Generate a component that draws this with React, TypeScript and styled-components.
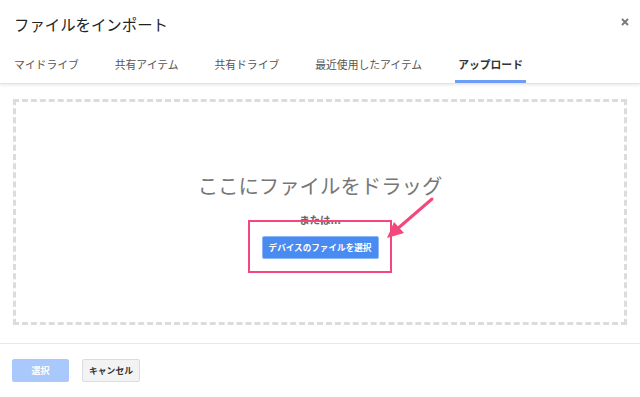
import styled, { createGlobalStyle } from "styled-components";

const GlobalStyle = createGlobalStyle`
  html,
  body {
    margin: 0;
    background: #fff;
  }
  body {
    font-family: "Noto Sans CJK JP", "Noto Sans", sans-serif;
    color: #222;
  }
`;

const Dialog = styled.div`
  width: 640px;
  height: 397px;
  display: flex;
  flex-direction: column;
  background: #fff;
`;

const Header = styled.div`
  border-bottom: 1px solid #e4e4e4;
  box-shadow: 0 1px 3px rgba(0, 0, 0, 0.1);
`;

const TitleRow = styled.div`
  height: 50px;
  display: flex;
  align-items: center;
  justify-content: space-between;
  padding: 0 10px 2px 14px;
  box-sizing: border-box;
`;

const Title = styled.h1`
  margin: 0;
  font-size: 15.4px;
  font-weight: 400;
  color: #222;
`;

const Close = styled.button`
  border: 0;
  background: none;
  padding: 0;
  width: 10px;
  height: 10px;
  display: flex;
  align-items: center;
  justify-content: center;
  margin-bottom: 4px;
`;

const Tabs = styled.div`
  display: flex;
  gap: 30px;
  padding-left: 11px;
  height: 33px;
`;

const Tab = styled.div<{ $active?: boolean }>`
  display: flex;
  align-items: center;
  padding: 0 3px 2px;
  box-sizing: border-box;
  font-size: 10.8px;
  font-weight: ${(p) => (p.$active ? 700 : 400)};
  color: ${(p) => (p.$active ? "#333" : "#555")};
  border-bottom: 3px solid ${(p) => (p.$active ? "#6d9ef6" : "transparent")};
`;

const Body = styled.div`
  padding: 15px 13px 0;
`;

const DropZone = styled.div`
  height: 226px;
  box-sizing: border-box;
  border: 3px dashed #dcdcdc;
  display: flex;
  flex-direction: column;
  align-items: center;
  padding-top: 71px;
`;

const DropText = styled.div`
  font-size: 20.4px;
  line-height: 24px;
  color: #777;
`;

const OrText = styled.div`
  margin-top: 16px;
  font-size: 10.5px;
  line-height: 14px;
  font-weight: 700;
  color: #666;
`;

const PickWrap = styled.div`
  position: relative;
  margin-top: 5px;
`;

const PrimaryButton = styled.button<{ $disabled?: boolean }>`
  font-family: inherit;
  font-weight: 700;
  color: #fff;
  border-radius: 2px;
  background: ${(p) => (p.$disabled ? "#a9c8fb" : "#4a8bf2")};
  border: 1px solid ${(p) => (p.$disabled ? "#a9c8fb" : "#8db6fa")};
  padding: 0;
`;

const PickButton = styled(PrimaryButton)`
  width: 117px;
  height: 23px;
  font-size: 8.6px;
`;

const Highlight = styled.div`
  position: absolute;
  top: -12px;
  left: -14px;
  right: -13px;
  bottom: -14px;
  border: 2px solid #f4477c;
  pointer-events: none;
`;

const Arrow = styled.svg`
  position: absolute;
  left: calc(100% + 4px);
  top: -37px;
  pointer-events: none;
`;

const Footer = styled.div`
  margin-top: 18px;
  border-top: 1px solid #e8e8e8;
  padding: 15px 12px;
  display: flex;
  gap: 13px;
`;

const FooterButton = styled(PrimaryButton)`
  width: 57px;
  height: 23px;
  font-size: 9px;
`;

const CancelButton = styled.button`
  width: 58px;
  height: 23px;
  font-family: inherit;
  font-size: 8.8px;
  font-weight: 700;
  color: #333;
  background: #f3f3f3;
  border: 1px solid #dcdcdc;
  border-radius: 2px;
  padding: 0;
`;

const tabs = ["マイドライブ", "共有アイテム", "共有ドライブ", "最近使用したアイテム", "アップロード"];

const App = () => {
  return (
    <>
      <GlobalStyle />
      <Dialog>
        <Header>
          <TitleRow>
            <Title>ファイルをインポート</Title>
            <Close aria-label="閉じる">
              <svg width="8" height="8" viewBox="0 0 8 8">
                <path d="M1 1L7 7M7 1L1 7" stroke="#777" strokeWidth="1.8" />
              </svg>
            </Close>
          </TitleRow>
          <Tabs>
            {tabs.map((t, i) => (
              <Tab key={t} $active={i === tabs.length - 1}>
                {t}
              </Tab>
            ))}
          </Tabs>
        </Header>

        <Body>
          <DropZone>
            <DropText>ここにファイルをドラッグ</DropText>
            <OrText>または...</OrText>
            <PickWrap>
              <PickButton>デバイスのファイルを選択</PickButton>
              <Highlight />
              <Arrow width="56" height="50" viewBox="0 0 56 50">
                <path d="M49 4L13 35" stroke="#f4477c" strokeWidth="3" strokeLinecap="round" />
                <path d="M4 43L11 27L21 38Z" fill="#f4477c" />
              </Arrow>
            </PickWrap>
          </DropZone>
        </Body>

        <Footer>
          <FooterButton $disabled>選択</FooterButton>
          <CancelButton>キャンセル</CancelButton>
        </Footer>
      </Dialog>
    </>
  );
};

export default App;
